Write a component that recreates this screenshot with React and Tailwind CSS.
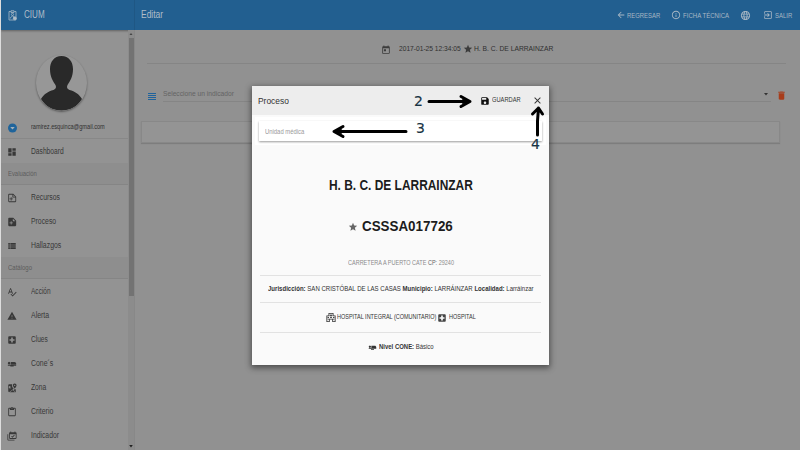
import React, { useLayoutEffect, useRef, useState } from "react";
import {
  MdDashboard, MdViewList, MdSpellcheck, MdWarning, MdLocalHospital, MdContentPaste,
  MdArrowBack, MdInfoOutline, MdLanguage, MdExitToApp, MdToday, MdGrade, MdDelete,
  MdSave, MdClose, MdAirlineSeatFlat,
} from "react-icons/md";

// Text condensed or expanded horizontally to occupy exactly `w` pixels.
function Fit({ w, className = "", children }) {
  const ref = useRef(null);
  const [scale, setScale] = useState(1);
  useLayoutEffect(() => {
    setScale(w / ref.current.offsetWidth);
  }, [w]);
  return (
    <span className={"block shrink-0 whitespace-nowrap " + className} style={{ width: w }}>
      <span ref={ref} className="inline-block origin-left" style={{ transform: `scaleX(${scale})` }}>
        {children}
      </span>
    </span>
  );
}

function Svg({ children, className = "" }) {
  return (
    <svg viewBox="0 0 24 24" fill="currentColor" className={className}>
      {children}
    </svg>
  );
}

const NoteOutline = () => (
  <Svg className="size-full">
    <path fillRule="evenodd" d="M5 2h10l7 7v11a2 2 0 0 1-2 2H5a2 2 0 0 1-2-2V4a2 2 0 0 1 2-2zm0 2v16h15v-9h-7V4H5zm10 .5V9h4.500L15 4.500zM9 10h2v3h3v2h-3v3H9v-3H6v-2h3v-3z" />
  </Svg>
);
const NoteFilled = () => (
  <Svg className="size-full">
    <path fillRule="evenodd" d="M5 2h10l7 7v11a2 2 0 0 1-2 2H5a2 2 0 0 1-2-2V4a2 2 0 0 1 2-2zm9 2v6h6l-6-6zM9 10v3H6v2h3v3h2v-3h3v-2h-3v-3H9z" />
  </Svg>
);
const MapPin = () => (
  <Svg className="size-full">
    <path fillRule="evenodd" d="M18.500 1C21 1 23 3 23 5.500c0 3-4.500 8-4.500 8s-4.500-5-4.500-8C14 3 16 1 18.500 1zm0 3a1.600 1.600 0 1 0 0 3.200 1.600 1.600 0 0 0 0-3.200zM5 3h7.500C11 7 13 11 16 14L5 22c-1 0-2-1-2-2V5c0-1 1-2 2-2zm2 4a3 3 0 1 0 3 4H7V9h2c0-1-1-2-2-2zM14 17l-7 5h12l-5-5z" />
    <path d="M18 15h3v7h-1l-4-5z" />
  </Svg>
);
const CalendarStack = () => (
  <Svg className="size-full">
    <path fillRule="evenodd" d="M7 3h1V1h2v2h8V1h2v2h1a2 2 0 0 1 2 2v12a2 2 0 0 1-2 2H7a2 2 0 0 1-2-2V5c0-1 1-2 2-2zm0 5v9h14V8H7zm11.500 2.500L13 16l-3-3 1.300-1.300L13 13.400l4.200-4.200 1.300 1.300z" />
    <path d="M1 8h2v13h15v2H3a2 2 0 0 1-2-2V8z" />
  </Svg>
);
const Badge = () => (
  <svg viewBox="0 0 18 22" className="h-[11px] w-[9px] shrink-0" fill="none" stroke="currentColor" strokeWidth="1.5">
    <path d="M5.500 3H2v17h14V3h-3.500" />
    <path d="M6 1.500h6V5H6z" />
    <circle cx="9" cy="9" r="2.200" />
    <path d="M4.500 17v-1.500L9 12l3 2" />
    <circle cx="13.500" cy="16.500" r="3" fill="currentColor" />
  </svg>
);
const Building = () => (
  <Svg className="h-[11px] w-[10px] shrink-0">
    <path fillRule="evenodd" d="M6 1h12v6h5v16h-8v-6H9v6H1V7h5V1zm2 2v6H3v12h4v-6h10v6h4V9h-5V3H8zm3 1h2v2h2v2h-2v2h-2V8H9V6h2V4zM4 11h3v2H4zm0 4h3v2H4zm13-4h3v2h-3zm0 4h3v2h-3zm-7-4h4v2h-4z" />
  </Svg>
);

function Item({ icon, label, w }) {
  return (
    <div className="flex h-6 shrink-0 items-center pl-[6px] text-[#383838]">
      <span className="mt-[2px] block size-[10px] shrink-0">{icon}</span>
      <Fit w={w} className="ml-[14px] mt-px text-[8.5px]">{label}</Fit>
    </div>
  );
}

function Section({ label, w }) {
  return (
    <div className="flex h-[22px] shrink-0 items-center border-b border-[#858585] bg-[#8e8e8e] pl-[7px] text-[7.5px] text-[#5c5c5c]">
      <Fit w={w}>{label}</Fit>
    </div>
  );
}

function Sidebar() {
  return (
    <aside className="flex w-[133px] shrink-0 flex-col bg-[#939393]">
      <div className="flex h-[30px] shrink-0 items-center bg-[#225f90] pl-[7px] text-[#b0bdc8] shadow-[0_1px_2px_#0005]">
        <Badge />
        <Fit w={21} className="ml-[7px] text-[10px]">CIUM</Fit>
      </div>
      <div className="flex min-h-0 flex-1">
        <div className="flex min-w-0 flex-1 flex-col overflow-hidden">
          <div className="flex h-[109px] shrink-0 flex-col border-b border-[#888]">
            <div className="ml-[35px] mt-[25px] h-[56px] w-[51px] overflow-hidden rounded-[50%] bg-[#979797] shadow-[0_1px_2px_#0006]">
              <svg viewBox="0 0 51 56" className="size-full" fill="#292929">
                <path d="M25.500 1C18 1 14 7 14 14c0 8 3 12 5.500 16 1 2 .5 4-2 5C12 36.500 8 39 5 44c5 8 12 11.500 20.500 11.500S41 52 46 44c-3-5-7-7.500-12.500-9-2.500-1-3-3-2-5C34 26 37 22 37 14 37 7 33 1 25.500 1z" />
              </svg>
            </div>
            <div className="mt-[11px] flex h-[10px] items-center pl-[7px]">
              <svg viewBox="0 0 24 24" className="mt-px h-[10px] w-[9px]">
                <circle cx="12" cy="12" r="12" fill="#1f649b" />
                <path d="M6 9h12l-6 7z" fill="#a5b0b8" />
              </svg>
              <Fit w={74} className="ml-[14px] text-[6.5px] text-[#303030]">ramirez.esquinca@gmail.com</Fit>
            </div>
          </div>
          <Item icon={<MdDashboard className="size-full" />} label="Dashboard" w={33} />
          <Section label="Evaluación" w={29} />
          <Item icon={<NoteOutline />} label="Recursos" w={29} />
          <Item icon={<NoteFilled />} label="Proceso" w={25} />
          <Item icon={<MdViewList className="size-full" />} label="Hallazgos" w={30} />
          <Section label="Catálogo" w={24} />
          <Item icon={<MdSpellcheck className="size-full" />} label="Acción" w={20} />
          <Item icon={<MdWarning className="size-full" />} label="Alerta" w={18} />
          <Item icon={<MdLocalHospital className="size-full" />} label="Clues" w={17} />
          <Item icon={<MdAirlineSeatFlat className="size-full" />} label="Cone´s" w={22} />
          <Item icon={<MapPin />} label="Zona" w={15} />
          <Item icon={<MdContentPaste className="size-full" />} label="Criterio" w={22} />
          <Item icon={<CalendarStack />} label="Indicador" w={28} />
        </div>
        <div className="flex w-[6px] shrink-0 flex-col items-center bg-[#8c8c8c]">
          <svg viewBox="0 0 6 8" className="h-[8px] w-[6px] shrink-0"><path d="M1.500 5h3L3 3z" fill="#444" /></svg>
          <div className="h-[258px] w-[5px] bg-[#737373]" />
          <svg viewBox="0 0 6 8" className="mt-auto h-[8px] w-[6px] shrink-0"><path d="M1.200 3h3.600L3 5.500z" fill="#222" /></svg>
        </div>
      </div>
    </aside>
  );
}

function Page() {
  return (
    <main className="flex min-w-0 flex-1 flex-col bg-[#919191]">
      <header className="flex h-[30px] shrink-0 items-center border-l border-[#1f5784] bg-[#225f90] pl-[6px] text-[7px] text-[#a8b7c4]">
        <Fit w={22} className="text-[10px] text-[#b0bdc8]">Editar</Fit>
        <div className="ml-auto flex items-center pr-[8px]">
          <MdArrowBack className="h-[10px] w-[10px]" />
          <Fit w={33} className="ml-px">REGRESAR</Fit>
          <MdInfoOutline className="ml-[11px] size-[10px]" />
          <Fit w={46} className="ml-[2px]">FICHA TÉCNICA</Fit>
          <MdLanguage className="ml-[11px] size-[11px]" />
          <MdExitToApp className="ml-[12px] size-[10px]" />
          <Fit w={17} className="ml-[2px]">SALIR</Fit>
        </div>
      </header>
      <div className="flex min-h-0 flex-1 flex-col border-l border-[#888]">
        <div className="ml-[12px] mr-[14px] flex h-[34px] shrink-0 items-center border-b border-[#858585] pl-[234px] pt-[5px] text-[#303030]">
          <MdToday className="mt-px size-[10px] text-[#3c3c3c]" />
          <Fit w={62} className="ml-[8px] text-[7.5px]">2017-01-25 12:34:05</Fit>
          <MdGrade className="ml-[2px] size-[10px] text-[#3c3c3c]" />
          <Fit w={79} className="ml-[1px] text-[7.5px]">H. B. C. DE LARRAINZAR</Fit>
        </div>
        <div className="ml-[12px] mr-[13px] mt-[20px] flex h-[18px] shrink-0">
          <svg viewBox="0 0 8 7" className="ml-px mt-[9px] h-[7px] w-[8px]" fill="#1f639c">
            <path d="M0 0h8v1H0zM0 2h8v1H0zM0 4h8v1H0zM0 6h8v1H0z" />
          </svg>
          <div className="ml-[7px] flex flex-1 items-center justify-between border-b border-[#858585] pr-[2px] pt-[3px]">
            <Fit w={71} className="text-[8px] text-[#646464]">Seleccione un indicador</Fit>
            <svg viewBox="0 0 6 4" className="h-[4px] w-[6px]"><path d="M1 1h4L3 3.500z" fill="#333" /></svg>
          </div>
          <MdDelete className="ml-[5px] mt-[6px] size-[11px] text-[#a83c1a]" />
        </div>
        <div className="ml-[6px] mr-[20px] mt-[19px] h-[22px] shrink-0 border border-[#888] bg-[#949494] shadow-[0_1px_1px_#0002]" />
      </div>
    </main>
  );
}

function Dialog() {
  return (
    <section className="absolute left-[252px] top-[86px] flex h-[279px] w-[297px] flex-col bg-[#fafafa] text-[#333] shadow-[0_2px_6px_1px_#0007]">
      <header className="flex h-[29px] shrink-0 items-center bg-[#ededed] pl-[6px] pr-[6px]">
        <Fit w={31} className="text-[9.5px]">Proceso</Fit>
        <MdSave className="ml-auto size-[10px] text-[#111]" />
        <Fit w={29} className="ml-[2px] text-[6.5px]">GUARDAR</Fit>
        <MdClose className="ml-[11px] h-[11px] w-[11px]" />
      </header>
      <div className="mx-[3px] mt-[2px] flex h-[28px] shrink-0 bg-white px-[4px] pb-[4px] pt-[4px]">
        <div className="flex flex-1 items-center bg-white pl-[6px] pt-[2px] shadow-[0_1px_2px_#0006]">
          <Fit w={39} className="text-[6.5px] text-[#999]">Unidad médica</Fit>
        </div>
      </div>
      <div className="mx-[8px] flex flex-1 flex-col">
        <div className="mt-[28px] flex h-[24px] items-center justify-center">
          <Fit w={144} className="text-[14px] font-bold text-[#1c1c1c]">H. B. C. DE LARRAINZAR</Fit>
        </div>
        <div className="mt-[17px] flex h-[24px] items-center justify-center">
          <MdGrade className="mt-[2px] size-[10px] text-[#666]" />
          <Fit w={91} className="-mt-[2px] ml-[4px] mr-px text-[15px] font-bold text-[#1c1c1c]">CSSSA017726</Fit>
        </div>
        <div className="mt-[13px] flex h-[25px] shrink-0 items-center justify-center border-b border-[#e2e2e2] text-[6.5px] text-[#8b8b8b]">
          <Fit w={106}>CARRETERA A PUERTO CATE <b className="font-normal text-[#666]">CP:</b> 29240</Fit>
        </div>
        <div className="flex h-[27px] shrink-0 items-center justify-center border-b border-[#e2e2e2] pt-px text-[6.5px]">
          <Fit w={266}><b>Jurisdicción:</b> SAN CRISTÓBAL DE LAS CASAS <b>Municipio:</b> LARRÁINZAR <b>Localidad:</b> Larráinzar</Fit>
        </div>
        <div className="flex h-[30px] shrink-0 items-center justify-center border-b border-[#e2e2e2] text-[6.5px]">
          <Building />
          <Fit w={99} className="ml-px">HOSPITAL INTEGRAL (COMUNITARIO)</Fit>
          <MdLocalHospital className="ml-px size-[10px] text-[#444]" />
          <Fit w={27} className="ml-[2px]">HOSPITAL</Fit>
        </div>
        <div className="flex h-[28px] shrink-0 items-center justify-center text-[6.5px]">
          <MdAirlineSeatFlat className="size-[9px]" />
          <Fit w={55} className="ml-[2px]"><b>Nivel CONE:</b> Básico</Fit>
        </div>
      </div>
    </section>
  );
}

// Numbered callouts pointing at the dialog's controls.
function Annotations() {
  return (
    <div className="absolute left-0 top-0 h-[450px] w-[800px] font-['DejaVu_Sans',sans-serif] text-[14px] leading-[16px] text-[#183444] [-webkit-text-stroke:0.15px_#183444]">
      <svg viewBox="0 0 800 450" className="absolute inset-0 size-full" fill="none" stroke="#000" strokeWidth="3" strokeLinecap="round" strokeLinejoin="round">
        <path d="M429 101.500H469M461 96.500l9 5-9 5" />
        <path d="M406 131.500H336M343 126.500l-9 5 9 5" />
        <path d="M537.500 135V121L538.500 108M532.500 114l6-6 4 6" />
        <path d="M463 99.500l5 2-5 2zM341 129.500l-5 2 5 2z" fill="#000" strokeWidth="1" />
      </svg>
      <span className="absolute left-[414px] top-[93px]">2</span>
      <span className="absolute left-[416px] top-[120px]">3</span>
      <span className="absolute left-[531px] top-[136px]">4</span>
    </div>
  );
}

export default function App() {
  return (
    <div className="relative flex h-[450px] w-[800px] overflow-hidden border-l border-[#ddd] bg-[#919191] font-['Liberation_Sans',Arial,sans-serif] leading-none">
      <Sidebar />
      <Page />
      <div className="absolute -left-px top-0">
        <Dialog />
        <Annotations />
      </div>
    </div>
  );
}
